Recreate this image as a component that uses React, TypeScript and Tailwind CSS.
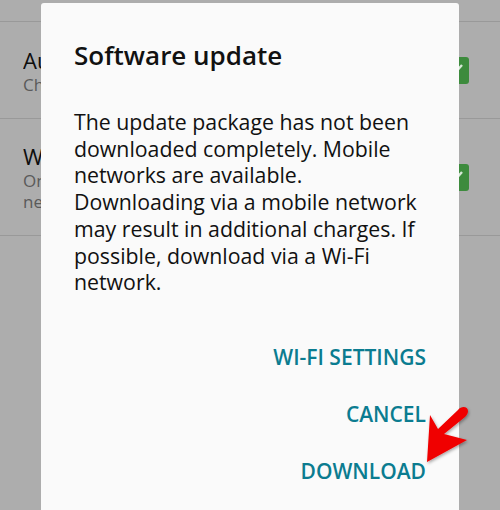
const font = { fontFamily: '"Open Sans", "Noto Sans", sans-serif' };

const Checkbox = () => (
  <div className="w-[26px] h-[27px] rounded-[3px] bg-[#3d8b3d] flex items-center justify-center">
    <svg width="18" height="18" viewBox="0 0 18 18">
      <path d="M3 9 L7 13 L15 4" stroke="#d8e8d8" strokeWidth="2.4" fill="none" />
    </svg>
  </div>
);

// only the left edge of each row peeks out from behind the dialog
const SettingRow = ({ title, lines, h }: { title: string; lines: string[]; h: string }) => (
  <div className={`flex items-center justify-between pl-[23px] pr-[31px] border-b border-[#999999] ${h}`}>
    <div className="flex flex-col w-[18px] overflow-hidden whitespace-nowrap">
      <span className="text-[22px] leading-[28px] text-[#0e0e0e]">{title}</span>
      {lines.map((l) => (
        <span key={l} className="text-[17px] leading-[21px] text-[#5a5a5a]">
          {l}
        </span>
      ))}
    </div>
    <Checkbox />
  </div>
);

const App = () => {
  return (
    <div className="relative w-[500px] h-[510px] overflow-hidden bg-[#adadad]" style={font}>
      {/* settings list behind the dialog */}
      <div className="flex flex-col">
        <div className="h-[22px] border-b border-[#999999]" />
        <SettingRow title="Auto update" lines={["Check for updates"]} h="h-[97px]" />
        <SettingRow title="Wi-Fi only" lines={["Only download", "network"]} h="h-[117px]" />
      </div>

      {/* dialog */}
      <div className="absolute left-[41px] top-[3px] w-[418px] h-[530px] bg-[#fafafa] rounded-[3px] flex flex-col pl-[33px] pr-[33px]">
        <h2 className="pt-[36px] text-[26px] leading-[32px] font-semibold text-[#111111]">Software update</h2>
        <p className="mt-[38px] text-[21.3px] leading-[26.7px] text-[#111111]">
          The update package has not been downloaded completely. Mobile networks are available. Downloading via a
          mobile network may result in additional charges. If possible, download via a Wi-Fi network.
        </p>
        <div className="mt-[47px] flex flex-col items-end gap-[28px] text-[21px] leading-[29px] font-semibold text-[#0b7c90]">
          <span>WI-FI SETTINGS</span>
          <span>CANCEL</span>
          <span>DOWNLOAD</span>
        </div>
      </div>

      {/* red arrow callout */}
      <svg className="absolute left-[420px] top-[398px]" width="60" height="75" viewBox="0 0 60 75">
        <defs>
          <filter id="sh" x="-30%" y="-30%" width="160%" height="160%">
            <feDropShadow dx="1" dy="1.5" stdDeviation="1.5" floodColor="#000" floodOpacity="0.35" />
          </filter>
        </defs>
        <path
          d="M7 64 L10 17 L18 31 L38 12 C42 7 48 9 48 13 C48 15 47 17 45 19 L24 36 L47 42 Z"
          fill="#f00000"
          filter="url(#sh)"
        />
      </svg>
    </div>
  );
};

export default App;
